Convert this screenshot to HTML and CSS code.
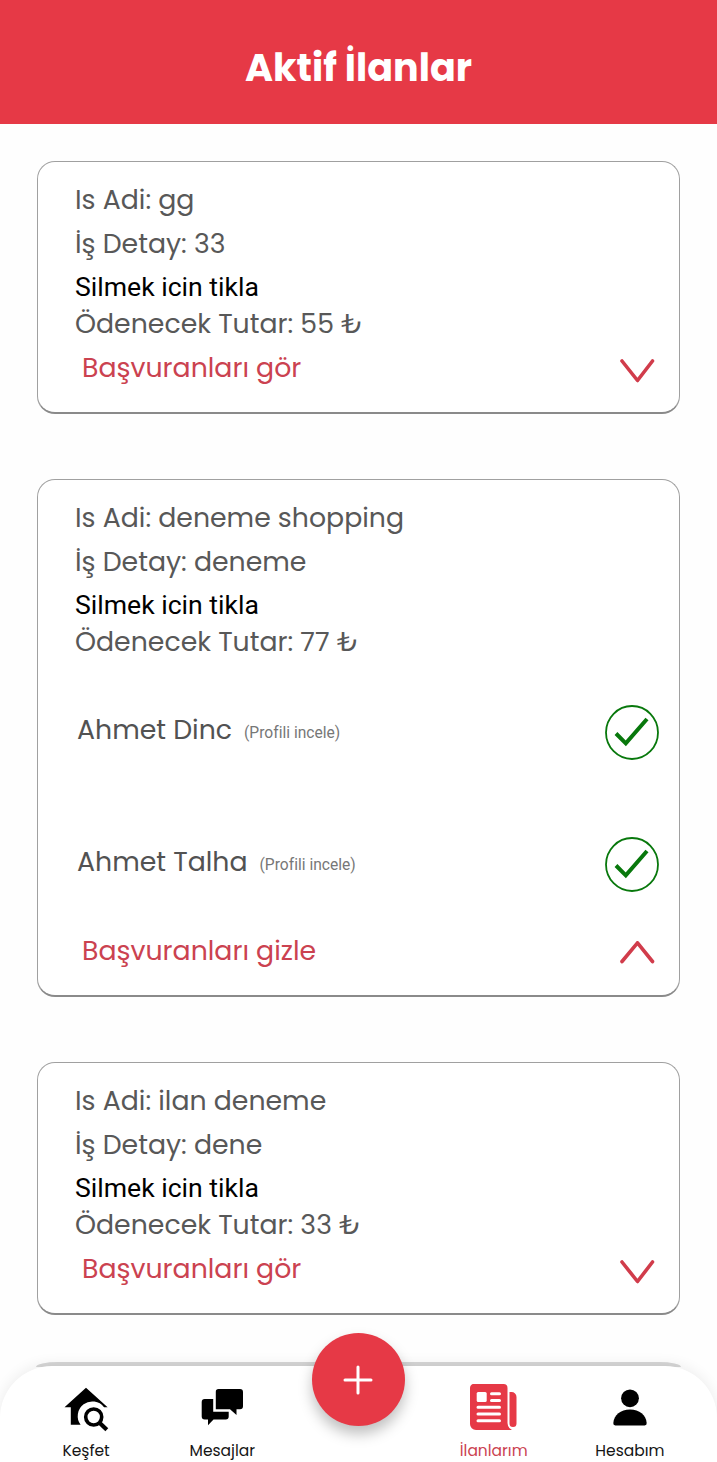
FILE: index.html
```html
<!DOCTYPE html>
<html lang="tr">
<head>
<meta charset="utf-8">
<title>Aktif İlanlar</title>
<link rel="stylesheet" href="styles.css">
</head>
<body>
<div class="screen">
  <header class="header"><h1 class="title">Aktif İlanlar</h1></header>

  <main class="list">
    <article class="card">
      <p class="line">Is Adi: gg</p>
      <p class="line">İş Detay: 33</p>
      <p class="delete">Silmek icin tikla</p>
      <p class="price">Ödenecek Tutar: 55 ₺</p>
      <div class="toggle"><span>Başvuranları gör</span>
        <svg class="chevron" viewBox="0 0 36 26"><path d="M3 3 18.500 22.500 33.500 3"/></svg>
      </div>
    </article>

    <article class="card">
      <p class="line">Is Adi: deneme shopping</p>
      <p class="line">İş Detay: deneme</p>
      <p class="delete">Silmek icin tikla</p>
      <p class="price">Ödenecek Tutar: 77 ₺</p>
      <ul class="applicants">
        <li class="applicant"><span class="name">Ahmet Dinc</span><span class="profile">(Profili incele)</span>
          <svg class="check" viewBox="0 0 54 55"><ellipse cx="27" cy="27.5" rx="26" ry="26.5"/><path d="M11 28.5 20.8 38.3 42 14"/></svg>
        </li>
        <li class="applicant"><span class="name">Ahmet Talha</span><span class="profile">(Profili incele)</span>
          <svg class="check" viewBox="0 0 54 55"><ellipse cx="27" cy="27.5" rx="26" ry="26.5"/><path d="M11 28.5 20.8 38.3 42 14"/></svg>
        </li>
      </ul>
      <div class="toggle"><span>Başvuranları gizle</span>
        <svg class="chevron" viewBox="0 0 36 26"><path d="M3 20.500 18.500 1.800 33.500 20.500"/></svg>
      </div>
    </article>

    <article class="card">
      <p class="line">Is Adi: ilan deneme</p>
      <p class="line">İş Detay: dene</p>
      <p class="delete">Silmek icin tikla</p>
      <p class="price">Ödenecek Tutar: 33 ₺</p>
      <div class="toggle"><span>Başvuranları gör</span>
        <svg class="chevron" viewBox="0 0 36 26"><path d="M3 3 18.500 22.500 33.500 3"/></svg>
      </div>
    </article>
  </main>

  <nav class="nav">
    <a class="tab">
      <svg class="icon" viewBox="0 0 48 48"><path d="M24 3.700 45.600 23.300H42A14.200 14.200 0 0 0 18.600 40.700H8.800V23.300H2.500Z"/><circle cx="31.700" cy="33" r="8" fill="none" stroke="#000" stroke-width="3.600"/><path d="m37.500 38.800 7.300 7" stroke="#000" stroke-width="4.200"/></svg>
      <span>Keşfet</span>
    </a>
    <a class="tab">
      <svg class="icon" viewBox="0 0 48 48"><path d="M20.500 5H42a3 3 0 0 1 3 3v14.300A3 3 0 0 1 42 25.300h-3.500V31L32 25.300H17.800V7.700A2.700 2.700 0 0 1 20.500 5Z"/><path d="M6.700 15H15.200V27.700H30.700V32.600a3 3 0 0 1-3 3H15.500L10 41.200V35.600H6.700a3 3 0 0 1-3-3V18a3 3 0 0 1 3-3Z"/></svg>
      <span>Mesajlar</span>
    </a>
    <div class="slot">
      <button class="add" aria-label="Ekle"><svg viewBox="0 0 30 30"><path d="M15 2v26M2 15h26"/></svg></button>
    </div>
    <a class="tab active">
      <svg class="icon" viewBox="0 0 48 48"><path d="M5 0H33.500a4 4 0 0 1 4 4V39q0 5 4.500 7H6a6 6 0 0 1-6-6V4a4 4 0 0 1 5-4ZM39.500 8h2a5 5 0 0 1 5 5V39.500a3.500 3.500 0 0 1-7 0Z"/><rect class="cut" x="6.700" y="8" width="10" height="10" rx="1.500"/><path class="rule" d="M21.500 9.800h8M21.500 16.500h8M8 23.300h21.500M8 30h21.500M8 36.700h21.500"/></svg>
      <span>İlanlarım</span>
    </a>
    <a class="tab">
      <svg class="icon" viewBox="0 0 48 48"><circle cx="24" cy="14.300" r="8.900"/><path d="M7.300 39C8 31 14.500 25.600 24 25.600S40 31 40.700 39q.2 2.400-2 2.400H9.300q-2.200 0-2-2.400Z"/></svg>
      <span>Hesabım</span>
    </a>
  </nav>
</div>
</body>
</html>
```
FILE: styles.css
```css
* { box-sizing: border-box; }
body, h1, p, ul { margin: 0; padding: 0; }
body { font-family: Poppins, Inter, sans-serif; background: #fefefe; color: #585858; }
.screen { height: 1462px; display: flex; flex-direction: column; overflow: hidden; isolation: isolate; }
.header { height: 124px; flex: none; padding-top: 12px; background: #e63946; display: flex; align-items: center; justify-content: center; }
.title { color: #fff; font-size: 38px; line-height: 48px; font-weight: 700; white-space: nowrap; }
.list { height: 1242px; flex: none; padding: 37px 37px 0; display: flex; flex-direction: column; gap: 65px; }
.card { border: 1px solid #a0a0a0; border-bottom: 2px solid #8a8a8a; border-radius: 18px; background: #fff; padding: 16px 20px 15px 37px; font-size: 26.750px; white-space: nowrap; }
.line { height: 44px; line-height: 44px; }
.delete { height: 42px; line-height: 42px; font-family: Roboto, sans-serif; font-size: 26.600px; color: #000; }
.price { height: 31px; line-height: 32px; }
.toggle { height: 58px; padding: 0 4px 0 7px; display: flex; align-items: center; justify-content: space-between; color: #cb4250; }
.chevron { width: 36px; height: 26px; margin-top: 6px; fill: none; stroke: #d13c4b; stroke-width: 3.600; stroke-linecap: round; stroke-linejoin: round; }
.applicants { list-style: none; padding: 48px 0 30px 2px; display: flex; flex-direction: column; gap: 77px; }
.applicant { height: 55px; display: flex; align-items: center; color: #525252; }
.name { margin-top: -6px; }
.profile { margin-left: 12px; font-family: Roboto, sans-serif; font-size: 15.600px; color: #777; }
.check { width: 54px; height: 55px; margin-left: auto; fill: none; stroke: #08780c; stroke-width: 1.800; }
.check path { stroke-width: 4; }
.nav { height: 96px; flex: none; background: #fff; border-radius: 52px 52px 0 0; box-shadow: 0 -2px 14px rgba(0,0,0,.07); padding: 0 18px; display: grid; grid-template-columns: repeat(5, 1fr); position: relative; }
.nav::before { content: ""; position: absolute; z-index: -1; left: 36px; right: 36px; top: -4px; height: 5px; background: #d6d6d6; border-radius: 22px 22px 0 0 / 5px 5px 0 0; }
.tab { display: flex; flex-direction: column; align-items: center; padding-top: 18px; font-size: 15.500px; color: #151515; white-space: nowrap; }
.active, .active + .tab { margin-left: -2px; }
.icon { width: 48px; height: 48px; fill: #000; }
.tab span { margin-top: 8px; line-height: 22px; }
.active { color: #cb4250; }
.active .icon { fill: #e63946; }
.icon .cut { fill: #fff; }
.icon .rule { fill: none; stroke: #fff; stroke-width: 3; stroke-linecap: round; }
.slot { display: flex; justify-content: center; }
.add { width: 93px; height: 93px; margin-top: -33px; padding: 0; border: 0; border-radius: 50%; background: #e63946; box-shadow: 0 8px 14px rgba(0,0,0,.25); display: flex; flex: none; align-items: center; justify-content: center; }
.add svg { width: 30px; height: 30px; fill: none; stroke: #fff; stroke-width: 3; stroke-linecap: round; }
```
